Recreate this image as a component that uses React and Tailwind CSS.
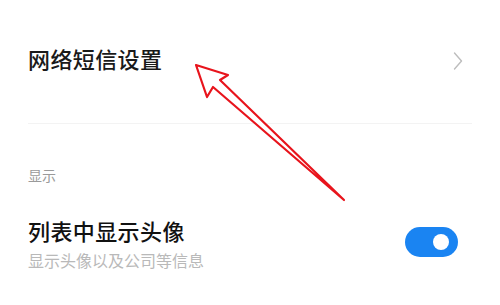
const font = { fontFamily: '"Noto Sans CJK SC", "Noto Sans", sans-serif' }

export default function App() {
  return (
    <div className="relative w-[500px] h-[305px] bg-white overflow-hidden" style={font}>
      <div className="px-[28px]">
        <div className="flex items-center justify-between h-[123px] pb-[8px]">
          <span className="text-[22px] leading-none font-medium tracking-[0.4px] text-[#1a1a1a]">网络短信设置</span>
          <svg width="10" height="18" viewBox="0 0 10 18" className="mr-[9px] mt-[6px]">
            <polyline points="1.5,1 8.5,9 1.5,17" fill="none" stroke="#bdbdbd" strokeWidth="1.4" strokeLinecap="round" strokeLinejoin="round" />
          </svg>
        </div>
        <div className="h-px bg-[#f3f3f3]" />
        <div className="pt-[44px] text-[14px] leading-none text-[#9a9a9a]">显示</div>
        <div className="flex items-center justify-between mt-[37px]">
          <div className="flex flex-col">
            <span className="text-[22px] leading-none font-medium tracking-[0.4px] text-[#111]">列表中显示头像</span>
            <span className="text-[16px] leading-none text-[#b9b9b9] mt-[11px]">显示头像以及公司等信息</span>
          </div>
          <div className="w-[53px] h-[30px] rounded-full bg-[#1a84f2] flex items-center justify-end pr-[9px] mr-[14px] mt-[-4px]">
            <div className="w-[16px] h-[16px] rounded-full bg-white" />
          </div>
        </div>
      </div>
      <svg className="absolute left-0 top-0 pointer-events-none" width="500" height="305">
        <polygon
          points="196,65 228,75 220,80 344,200 213,87 207,97"
          fill="white"
          stroke="#e8141c"
          strokeWidth="2.2"
          strokeLinejoin="round"
        />
      </svg>
    </div>
  )
}
